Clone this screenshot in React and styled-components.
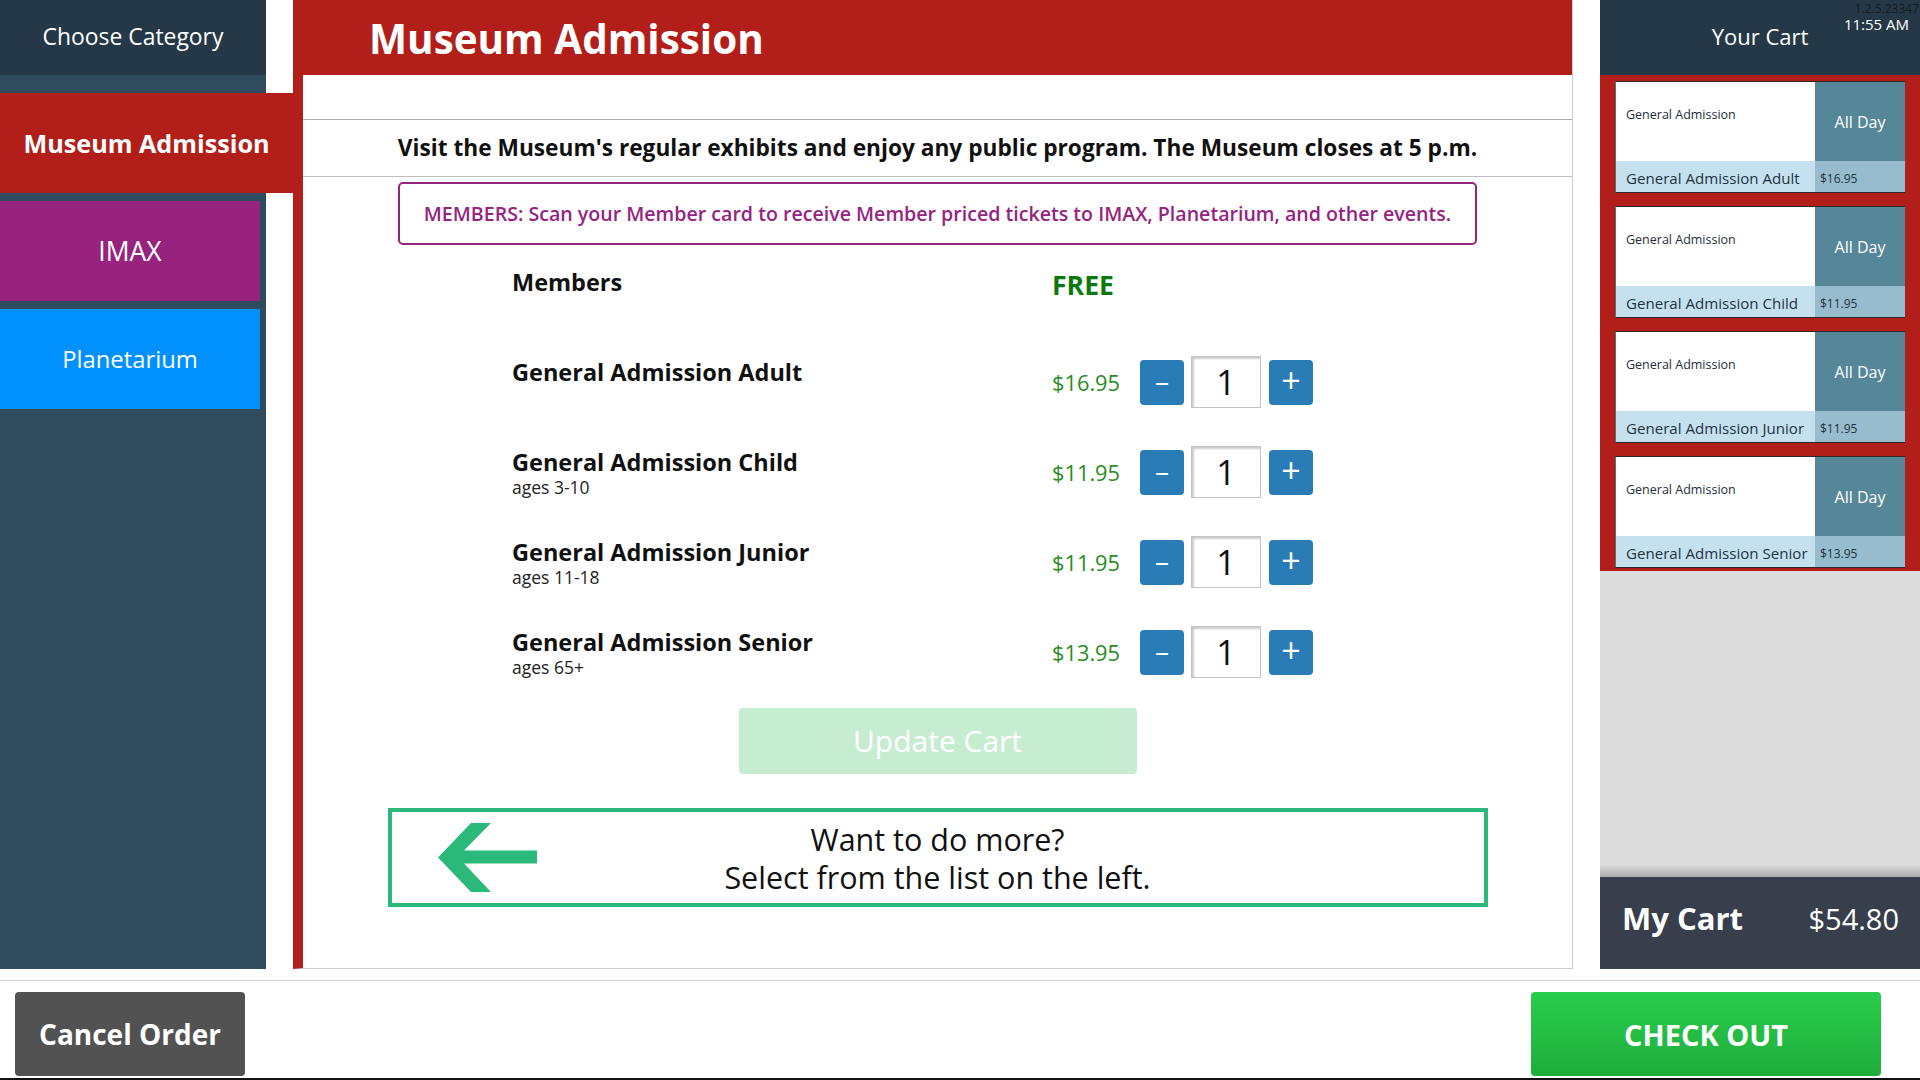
import React, {useState} from 'react';
import styled, {createGlobalStyle} from "styled-components";

const GlobalStyle = createGlobalStyle`
    html, body {
        margin: 0;
        padding: 0;
        background: #fff;
    }
    body {
        font-family: "Open Sans", "Noto Sans", "Liberation Sans", sans-serif;
    }
    * {
        box-sizing: border-box;
    }
`;

const RED = "#b21f1a";

const Page = styled.div`
    width: 1920px;
    height: 1080px;
    display: flex;
    flex-direction: column;
    overflow: hidden;
    background: #fff;
`;

const Top = styled.div`
    height: 969px;
    display: grid;
    grid-template-columns: 266px 1280px 320px;
    justify-content: space-between;
`;

// ---------- left side ----------

const Sidebar = styled.nav`
    background: #2f4c5e;
    display: flex;
    flex-direction: column;
`;

const SidebarHeader = styled.div`
    height: 75px;
    background: #243847;
    color: #fff;
    font-size: 22.9px;
    display: flex;
    align-items: center;
    justify-content: center;
    padding-bottom: 2px;
    margin-bottom: 18px;
`;

const CategoryItem = styled.div`
    height: 100px;
    width: ${(props) => (props.$active ? "293px" : "260px")};
    margin-bottom: 8px;
    background: ${(props) => props.$color};
    color: #fff;
    font-size: ${(props) => props.$size}px;
    font-weight: ${(props) => (props.$active ? 700 : 400)};
    display: flex;
    align-items: center;
    justify-content: center;
`;

// ---------- main panel ----------

const Main = styled.main`
    display: flex;
    flex-direction: column;
    border-left: 10px solid ${RED};
    border-right: 1px solid #cfcfcf;
    border-bottom: 1px solid #cfcfcf;
    background: #fff;
`;

const MainHeader = styled.header`
    height: 75px;
    background: ${RED};
    color: #fff;
    font-size: 40.4px;
    font-weight: 700;
    display: flex;
    align-items: center;
    padding: 2px 0 0 66px;
`;

const Spacer = styled.div`
    height: 45px;
    border-bottom: 1px solid #ababab;
`;

const Description = styled.p`
    margin: 0;
    height: 57px;
    border-bottom: 1px solid #bdbdbd;
    display: flex;
    align-items: center;
    justify-content: center;
    font-size: 22.7px;
    font-weight: 700;
    color: #111;
    padding-bottom: 2px;
`;

const Notice = styled.div`
    width: 1079px;
    height: 63px;
    margin: 5px auto 0;
    border: 2px solid #96237f;
    border-radius: 5px;
    display: flex;
    align-items: center;
    justify-content: center;
    color: #96237f;
    font-size: 19.6px;
    font-weight: 600;
`;

const ProductList = styled.div`
    margin: 2px 0 0 209px;
    width: 801px;
    display: flex;
    flex-direction: column;
`;

const ProductRow = styled.div`
    height: 90px;
    display: grid;
    grid-template-columns: 540px 88px 44px 85px 44px;
    align-items: center;
`;

const LabelBlock = styled.div`
    display: flex;
    flex-direction: column;
`;

const ProductName = styled.span`
    font-size: 23.5px;
    font-weight: 700;
    color: #111;
    line-height: 29px;
`;

const ProductSub = styled.span`
    font-size: 17.5px;
    color: #222;
    line-height: 20px;
    min-height: 20px;
`;

const Price = styled.span`
    font-size: ${(props) => (props.$free ? "26.6px" : "21.8px")};
    font-weight: ${(props) => (props.$free ? 700 : 400)};
    color: ${(props) => (props.$free ? "#0b7a0b" : "#2a8c24")};
    align-self: ${(props) => (props.$free ? "start" : "center")};
    margin-top: ${(props) => (props.$free ? "20px" : "0")};
`;

const StepButton = styled.button`
    width: 44px;
    height: 45px;
    border: none;
    border-radius: 4px;
    background: #2a7cb7;
    color: #fff;
    font-family: inherit;
    font-size: ${(props) => (props.$plus ? "34px" : "28px")};
    line-height: 1;
    padding: 0 0 4px;
    display: flex;
    align-items: center;
    justify-content: center;
    cursor: pointer;
`;

const QtyBox = styled.div`
    width: 70px;
    height: 52px;
    margin-left: 7px;
    border: 1px solid #c4c4c4;
    box-shadow: inset 2px 2px 2px rgba(0, 0, 0, 0.2);
    background: #fff;
    display: flex;
    align-items: center;
    justify-content: center;
    font-size: 34px;
    color: #111;
`;

const UpdateButton = styled.button`
    width: 398px;
    height: 66px;
    margin: 11px auto 0;
    border: none;
    border-radius: 4px;
    background: #c6edd1;
    color: #fff;
    font-family: inherit;
    font-size: 30px;
    padding-bottom: 3px;
`;

const MoreBox = styled.div`
    width: 1100px;
    height: 99px;
    margin: 34px auto 0;
    border: 4px solid #2bb97b;
    display: grid;
    grid-template-columns: 150px 1fr 150px;
    align-items: center;
`;

const ArrowCell = styled.div`
    padding-left: 46px;
    display: flex;
    align-items: center;
`;

const MoreText = styled.div`
    text-align: center;
    font-size: 30.5px;
    line-height: 38px;
    color: #111;
`;

// ---------- cart ----------

const Cart = styled.aside`
    display: flex;
    flex-direction: column;
`;

const CartHeader = styled.div`
    position: relative;
    height: 75px;
    background: #243847;
    color: #fff;
    font-size: 22px;
    display: flex;
    align-items: center;
    justify-content: center;
    padding-bottom: 4px;
`;

const Version = styled.span`
    position: absolute;
    top: 2px;
    right: 1px;
    font-size: 12px;
    line-height: 14px;
    color: #1a1a1a;
`;

const Clock = styled.span`
    position: absolute;
    top: 17px;
    right: 11px;
    font-size: 15px;
    color: #fff;
    line-height: 15px;
`;

const CartList = styled.div`
    background: ${RED};
    padding: 6px 15px 3px;
    display: flex;
    flex-direction: column;
    gap: 13px;
`;

const CartCard = styled.div`
    height: 112px;
    display: grid;
    grid-template-columns: 1fr 90px;
    grid-template-rows: 79px 31px;
    border-top: 1px solid #2a2a2a;
    border-bottom: 1px solid #2a2a2a;
    border-left: 1px solid #6a6a6a;
`;

const CardName = styled.div`
    background: #fff;
    padding: 24px 0 0 10px;
    font-size: 12.5px;
    color: #1e2f3b;
`;

const CardDay = styled.div`
    background: #568799;
    color: #fff;
    font-size: 16px;
    display: flex;
    align-items: center;
    justify-content: center;
`;

const CardLabel = styled.div`
    background: #c5e1ef;
    color: #1e3342;
    font-size: 15.1px;
    padding: 3px 0 0 10px;
    display: flex;
    align-items: center;
`;

const CardPrice = styled.div`
    background: #96bccd;
    color: #1e3342;
    font-size: 12px;
    padding: 4px 0 0 5px;
    display: flex;
    align-items: center;
`;

const CartFill = styled.div`
    flex: 1;
    background: linear-gradient(to bottom, #dcdcdc 0, #dcdcdc calc(100% - 12px), #a9a9a9 100%);
`;

const CartTotal = styled.div`
    height: 92px;
    background: #363f4b;
    color: #fff;
    display: flex;
    align-items: center;
    justify-content: space-between;
    padding: 0 21px 10px 22px;
`;

const TotalLabel = styled.span`
    font-size: 31px;
    font-weight: 700;
`;

const TotalAmount = styled.span`
    font-size: 29px;
`;

// ---------- footer ----------

const Footer = styled.footer`
    margin-top: 11px;
    flex: 1;
    border-top: 1px solid #d2d2d2;
    border-bottom: 2px solid #111;
    padding: 11px 39px 0 15px;
    display: flex;
    justify-content: space-between;
    align-items: flex-start;
`;

const FooterButton = styled.button`
    width: ${(props) => props.$width}px;
    height: 84px;
    border: none;
    border-radius: 4px;
    background: ${(props) => props.$bg};
    color: #fff;
    font-family: inherit;
    font-size: ${(props) => props.$size}px;
    font-weight: 700;
`;

const categories = [
    {name: "Museum Admission", color: RED, active: true, size: 25.2},
    {name: "IMAX", color: "#97237f", size: 26.5},
    {name: "Planetarium", color: "#0091ff", size: 23.8},
];

const products = [
    {name: "General Admission Adult", sub: "", price: "$16.95"},
    {name: "General Admission Child", sub: "ages 3-10", price: "$11.95"},
    {name: "General Admission Junior", sub: "ages 11-18", price: "$11.95"},
    {name: "General Admission Senior", sub: "ages 65+", price: "$13.95"},
];

function LeftArrow() {
    return (
        <svg width="99" height="69" viewBox="0 0 99 69">
            <path d="M0 34.5 L33 0 L53 0 L26 27.5 L99 27.5 L99 40.5 L26 40.5 L53 69 L33 69 Z" fill="#2bb97b"/>
        </svg>
    );
}

function App() {

    const [qty, setQty] = useState(products.map(() => 1));

    const change = (index, delta) => {
        setQty(qty.map((q, i) => (i === index ? Math.max(0, q + delta) : q)));
    };

    return (
        <Page>
            <GlobalStyle/>
            <Top>
                <Sidebar>
                    <SidebarHeader>Choose Category</SidebarHeader>
                    {categories.map((c) => (
                        <CategoryItem key={c.name} $color={c.color} $active={c.active} $size={c.size}>
                            {c.name}
                        </CategoryItem>
                    ))}
                </Sidebar>

                <Main>
                    <MainHeader>Museum Admission</MainHeader>
                    <Spacer/>
                    <Description>
                        Visit the Museum's regular exhibits and enjoy any public program. The Museum closes at 5 p.m.
                    </Description>
                    <Notice>
                        MEMBERS: Scan your Member card to receive Member priced tickets to IMAX, Planetarium, and other events.
                    </Notice>

                    <ProductList>
                        <ProductRow>
                            <LabelBlock>
                                <ProductName>Members</ProductName>
                                <ProductSub/>
                            </LabelBlock>
                            <Price $free>FREE</Price>
                        </ProductRow>
                        {products.map((p, i) => (
                            <ProductRow key={p.name}>
                                <LabelBlock>
                                    <ProductName>{p.name}</ProductName>
                                    <ProductSub>{p.sub}</ProductSub>
                                </LabelBlock>
                                <Price>{p.price}</Price>
                                <StepButton onClick={() => change(i, -1)}>–</StepButton>
                                <QtyBox>{qty[i]}</QtyBox>
                                <StepButton $plus onClick={() => change(i, 1)}>+</StepButton>
                            </ProductRow>
                        ))}
                    </ProductList>

                    <UpdateButton>Update Cart</UpdateButton>

                    <MoreBox>
                        <ArrowCell>
                            <LeftArrow/>
                        </ArrowCell>
                        <MoreText>
                            Want to do more?<br/>
                            Select from the list on the left.
                        </MoreText>
                    </MoreBox>
                </Main>

                <Cart>
                    <CartHeader>
                        Your Cart
                        <Version>1.2.5.23347</Version>
                        <Clock>11:55 AM</Clock>
                    </CartHeader>
                    <CartList>
                        {products.map((p) => (
                            <CartCard key={p.name}>
                                <CardName>General Admission</CardName>
                                <CardDay>All Day</CardDay>
                                <CardLabel>{p.name}</CardLabel>
                                <CardPrice>{p.price}</CardPrice>
                            </CartCard>
                        ))}
                    </CartList>
                    <CartFill/>
                    <CartTotal>
                        <TotalLabel>My Cart</TotalLabel>
                        <TotalAmount>$54.80</TotalAmount>
                    </CartTotal>
                </Cart>
            </Top>

            <Footer>
                <FooterButton $width={230} $bg="#525252" $size={28}>Cancel Order</FooterButton>
                <FooterButton $width={350} $bg="linear-gradient(to bottom, #29cd4d, #1fad3b)" $size={29}>CHECK OUT</FooterButton>
            </Footer>
        </Page>
    );
}

export default App;
